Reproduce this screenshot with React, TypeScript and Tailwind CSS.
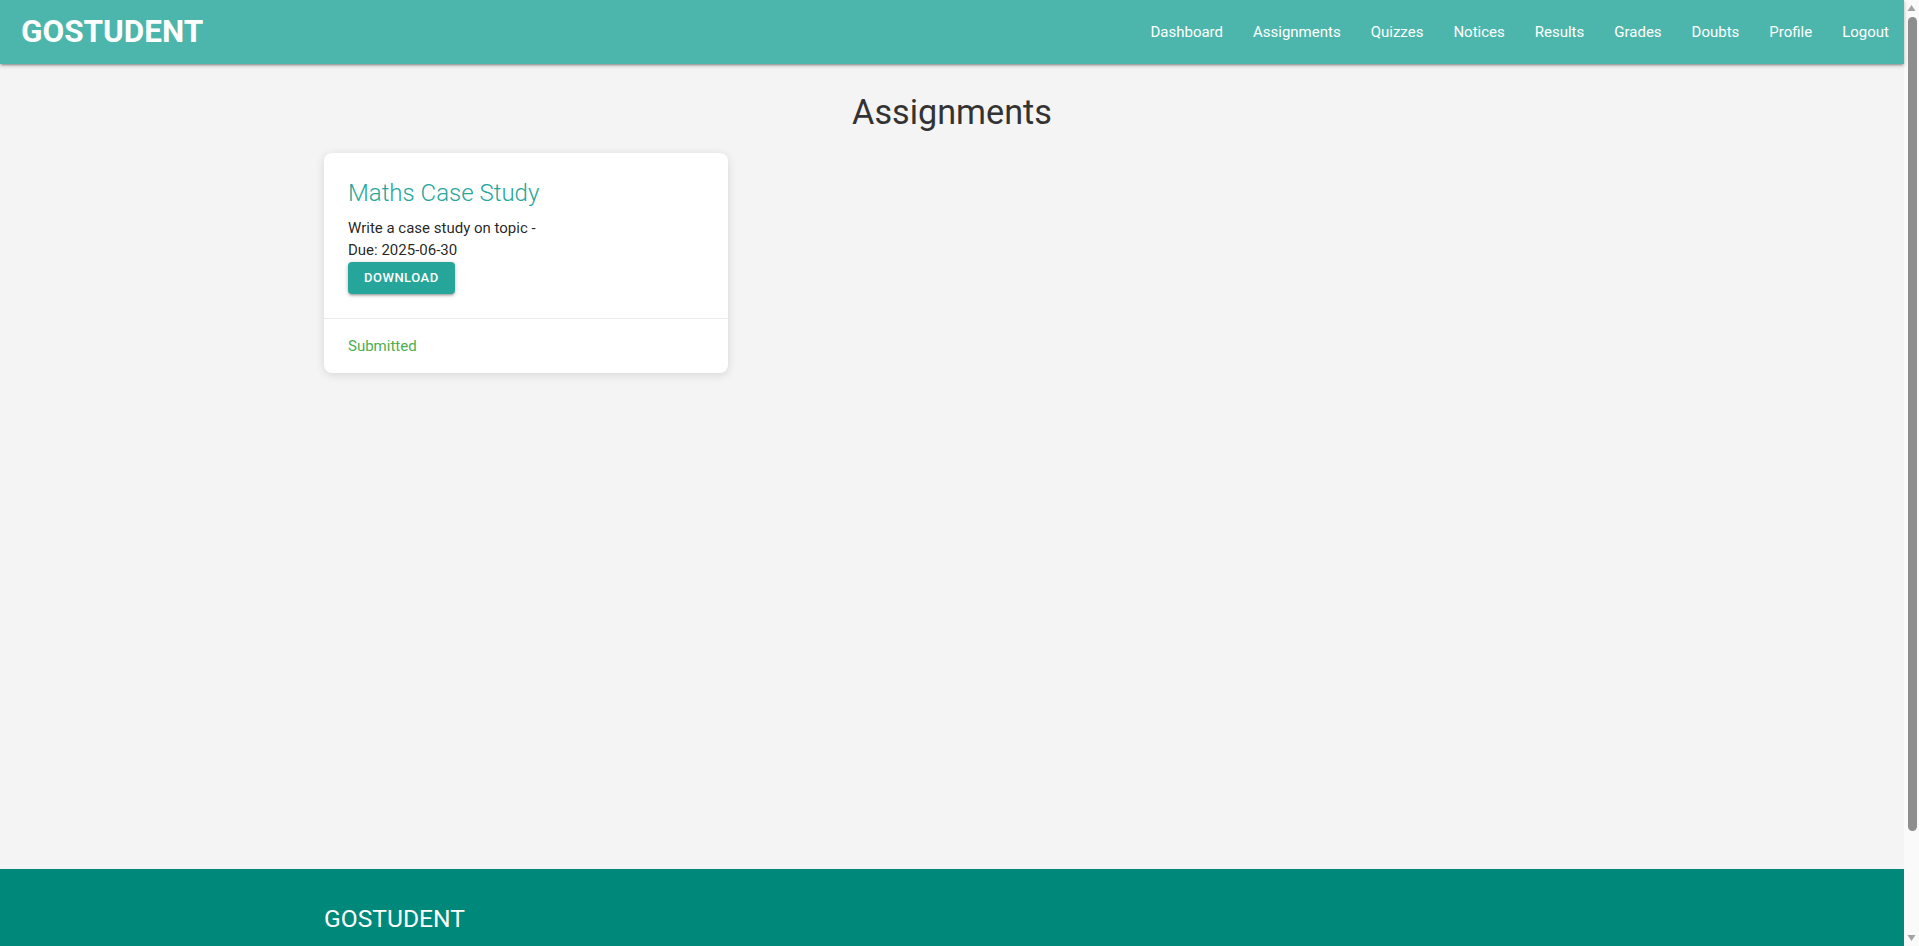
import { useMemo } from "react";

interface Assignment {
  title: string;
  description: string;
  due: string;
  submitted: boolean;
}

const navLinks = ["Dashboard", "Assignments", "Quizzes", "Notices", "Results", "Grades", "Doubts", "Profile", "Logout"];

const assignments: Assignment[] = [
  { title: "Maths Case Study", description: "Write a case study on topic -", due: "2025-06-30", submitted: true },
];

function Navbar() {
  return (
    <nav className="relative z-10 flex h-16 shrink-0 items-center justify-between bg-[#4db6ac] shadow-[0_2px_2px_0_rgba(0,0,0,0.14),0_3px_1px_-2px_rgba(0,0,0,0.12),0_1px_5px_0_rgba(0,0,0,0.2)]">
      <a href="#" className="pl-[21px] text-[31.5px] font-bold leading-[64px] text-white">
        GOSTUDENT
      </a>
      <ul className="flex h-full">
        {navLinks.map((link) => (
          <li key={link}>
            <a href="#" className="block px-[15px] text-[15px] leading-[64px] text-white">
              {link}
            </a>
          </li>
        ))}
      </ul>
    </nav>
  );
}

function AssignmentCard({ item }: { item: Assignment }) {
  return (
    <div className="w-[404px] rounded-lg bg-white shadow-[0_2px_10px_rgba(0,0,0,0.12)]">
      <div className="p-6">
        <span className="mb-2 block text-2xl font-light leading-8 text-[#26a69a]">{item.title}</span>
        <p>{item.description}</p>
        <p>Due: {item.due}</p>
        <a
          href="#"
          className="inline-block h-8 rounded-sm bg-[#26a69a] px-4 text-[13px] font-medium uppercase leading-8 tracking-[0.5px] text-white shadow-[0_2px_2px_0_rgba(0,0,0,0.14),0_3px_1px_-2px_rgba(0,0,0,0.12),0_1px_5px_0_rgba(0,0,0,0.2)]"
        >
          Download
        </a>
      </div>
      <div className="border-t border-[rgba(160,160,160,0.2)] px-6 py-4">
        {item.submitted ? (
          <span className="text-[#4caf50]">Submitted</span>
        ) : (
          <span className="text-[#f44336]">Pending</span>
        )}
      </div>
    </div>
  );
}

// browser scrollbar as it shows in the screenshot
function ScrollTrack() {
  return (
    <aside className="flex w-[15px] shrink-0 flex-col items-center bg-[#fafafa]">
      <svg width="15" height="17" viewBox="0 0 15 17" className="shrink-0">
        <path d="M3.5 11 L7.5 5 L11.5 11 Z" fill="#a3a3a3" />
      </svg>
      <div className="ml-[2px] h-[814px] w-[9px] shrink-0 rounded-full bg-[#8e8e8e]" />
      <div className="flex-1" />
      <svg width="15" height="17" viewBox="0 0 15 17" className="shrink-0">
        <path d="M3.5 6 L7.5 12 L11.5 6 Z" fill="#a3a3a3" />
      </svg>
    </aside>
  );
}

export default function App() {
  const list = useMemo(() => assignments, []);

  return (
    <div className="flex h-screen overflow-hidden bg-[#f4f4f4] font-['Roboto','Liberation_Sans',sans-serif] text-[15px] leading-[1.5] text-[rgba(0,0,0,0.87)]">
      <div className="flex min-w-0 flex-1 flex-col">
        <Navbar />

        <main className="min-h-[805px] shrink-0">
          <h4 className="mt-[30px] mb-[21px] text-center text-[34.2px] leading-[1.1] text-[#333]">Assignments</h4>
          <div className="mx-auto max-w-[1280px] px-3">
            <div className="flex flex-wrap gap-6">
              {list.map((a) => (
                <AssignmentCard key={a.title} item={a} />
              ))}
            </div>
          </div>
        </main>

        <footer className="shrink-0 bg-[#00897b] pt-5 pb-[130px]">
          <div className="mx-auto max-w-[1280px] px-3">
            <h5 className="mt-[16.4px] text-[24.6px] leading-[1.1] text-white">GOSTUDENT</h5>
          </div>
        </footer>
      </div>
      <ScrollTrack />
    </div>
  );
}
